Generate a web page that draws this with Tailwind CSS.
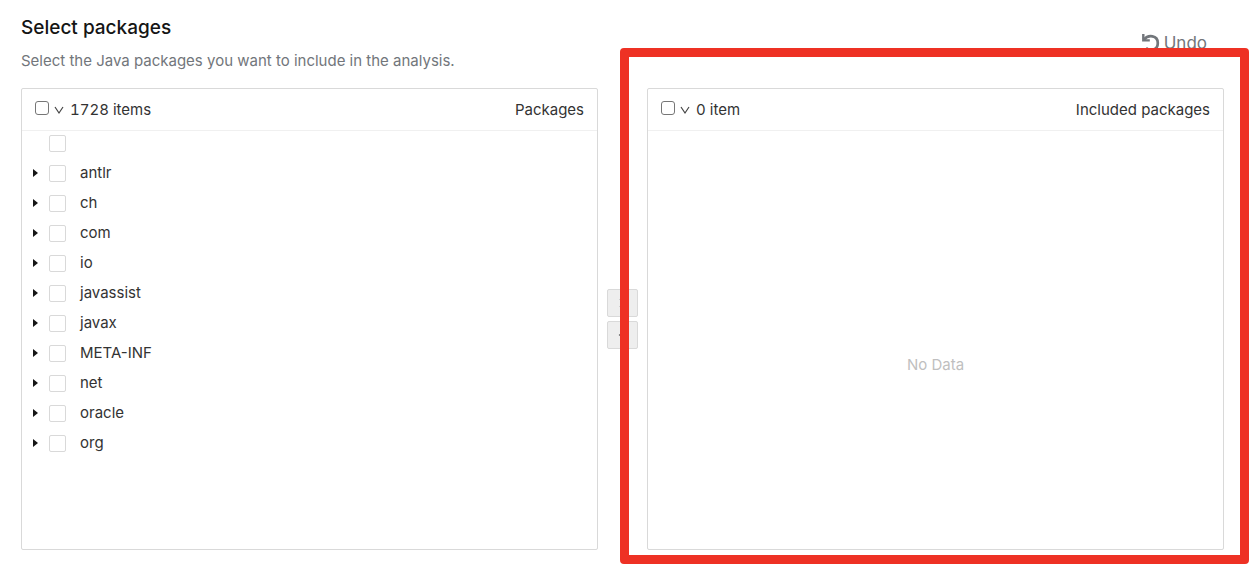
<!DOCTYPE html>
<html lang="en">
<head>
<meta charset="utf-8">
<meta name="viewport" content="width=device-width, initial-scale=1">
<title>Select packages</title>
<script src="https://cdn.jsdelivr.net/npm/@tailwindcss/browser@4"></script>
</head>
<body class="flex min-h-screen flex-col bg-white pt-3 pr-[30px] pb-[18px] pl-[21px] font-['Inter',sans-serif] text-[15px] text-[#333]">
<header class="flex items-start justify-between">
  <div>
    <h1 class="text-[19px] leading-8 font-medium text-[#151515]">Select packages</h1>
    <p class="mt-[5px] leading-6 text-[#72767b]">Select the Java packages you want to include in the analysis.</p>
  </div>
  <button type="button" class="mt-[19px] mr-[17px] flex items-center gap-1 text-[17px] leading-6 text-[#72767b]">
    <svg class="h-[18px] w-[18px]" viewBox="0 0 18 18" fill="none" stroke="currentColor" aria-hidden="true"><path d="M1.300 0v6.400h6.500" stroke-width="2.400"/><path d="M2 5.800C6 .3 15.800 1 15.800 9C15.800 16 8.500 18 4 14" stroke-width="2.700"/></svg>
    Undo
  </button>
</header>
<main class="mt-[15px] flex flex-1 items-stretch">
  <section class="flex min-h-[462px] flex-1 flex-col rounded-xs border border-[#d9d9d9]">
    <div class="flex h-[42px] items-center border-b border-[#f0f0f0] px-[13px]">
      <input id="all-source" type="checkbox" aria-label="Select all packages" class="mb-1 h-[14px] w-[14px] appearance-none rounded-[3px] border border-[#767676] bg-white">
      <button type="button" aria-label="Selection options" class="ml-[5px] w-[10px]"><svg class="h-[10px] w-[10px]" viewBox="0 0 10 10" fill="none" stroke="#444" stroke-width="1.200" aria-hidden="true"><path d="M1 2l4 6 4-6"/></svg></button>
      <label for="all-source" class="ml-[6px] pt-[2px] tabular-nums">1728 items</label>
      <h2 class="ml-auto pt-[2px]">Packages</h2>
    </div>
    <ul id="tree" class="-mt-[3px]"></ul>
  </section>
  <div class="flex w-[49px] flex-col items-center justify-center gap-1">
    <button type="button" aria-label="Include selected" class="flex h-7 w-[31px] items-center justify-center rounded-xs border border-[#d9d9d9] bg-[#eee]"><svg class="h-[10px] w-[10px]" viewBox="0 0 10 10" fill="none" stroke="#333" stroke-width="1.500" aria-hidden="true"><path d="M2 1l6 4-6 4"/></svg></button>
    <button type="button" aria-label="Remove selected" class="flex h-7 w-[31px] items-center justify-center rounded-xs border border-[#d9d9d9] bg-[#eee]"><svg class="h-[10px] w-[10px]" viewBox="0 0 10 10" fill="none" stroke="#333" stroke-width="1.500" aria-hidden="true"><path d="M8 1L2 5l6 4"/></svg></button>
  </div>
  <section class="relative flex flex-1 flex-col rounded-xs border border-[#d9d9d9]">
    <div class="flex h-[42px] items-center border-b border-[#f0f0f0] px-[13px]">
      <input id="all-target" type="checkbox" aria-label="Select all included packages" class="mb-1 h-[14px] w-[14px] appearance-none rounded-[3px] border border-[#767676] bg-white">
      <button type="button" aria-label="Included selection options" class="ml-[5px] w-[10px]"><svg class="h-[10px] w-[10px]" viewBox="0 0 10 10" fill="none" stroke="#444" stroke-width="1.200" aria-hidden="true"><path d="M1 2l4 6 4-6"/></svg></button>
      <label for="all-target" class="ml-[6px] pt-[2px] tabular-nums">0 item</label>
      <h2 class="ml-auto pt-[2px]">Included packages</h2>
    </div>
    <div class="flex flex-1 items-center justify-center pt-[50px] text-[#bfbfbf]">No Data</div>
    <div class="pointer-events-none absolute -top-[41px] -right-[26px] -bottom-[15px] -left-[28px] rounded-[4px] border-[9px] border-[#ee3124]"></div>
  </section>
</main>
<script>
const names = ['', 'antlr', 'ch', 'com', 'io', 'javassist', 'javax', 'META-INF', 'net', 'oracle', 'org'];
const arrow = '<svg class="h-2 w-[5px]" viewBox="0 0 5 8" fill="#151515" aria-hidden="true"><path d="M0 0l5 4-5 4z"/></svg>';
document.getElementById('tree').innerHTML = names.map((name, i) => `
  <li class="flex h-[30px] items-center pl-[11px]">
    ${name ? `<button type="button" aria-label="Expand ${name}" class="w-[5px]">${arrow}</button>` : '<span class="w-[5px]"></span>'}
    <input id="pkg-${i}" type="checkbox" aria-label="${name || 'Default package'}" class="ml-[11px] h-[17px] w-[17px] appearance-none rounded-xs border border-[#d9d9d9] bg-white">
    <label for="pkg-${i}" class="ml-[14px]">${name}</label>
  </li>`).join('');
</script>
</body>
</html>
